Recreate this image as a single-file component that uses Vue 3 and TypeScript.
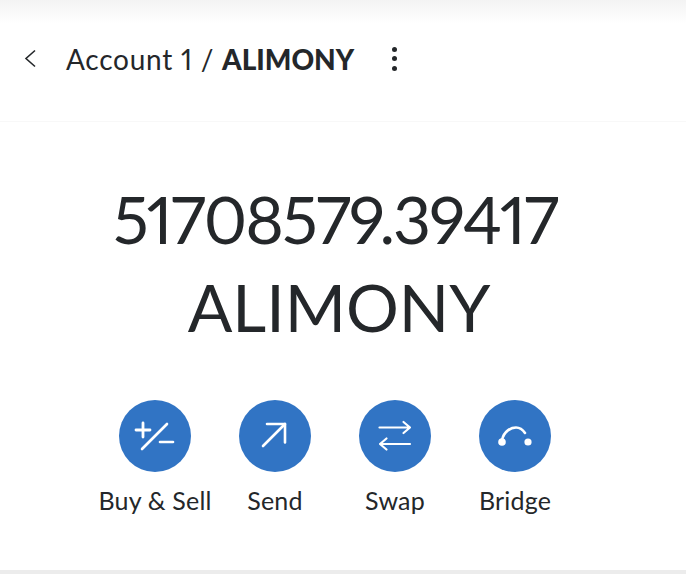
<script setup lang="ts">
interface Action { label: string; icon: string }
const actions: Action[] = [
  { label: 'Buy & Sell', icon: 'buy' },
  { label: 'Send', icon: 'send' },
  { label: 'Swap', icon: 'swap' },
  { label: 'Bridge', icon: 'bridge' },
]
</script>

<template>
  <div class="page">
    <header class="top">
      <svg class="back" width="14" height="20" viewBox="0 0 14 20" fill="none">
        <path d="M12 1.5 3 9.5 12 17.5" stroke="#24272a" stroke-width="1.6" />
      </svg>
      <h1 class="title">Account 1 / <b>ALIMONY</b></h1>
      <div class="dots"><i></i><i></i><i></i></div>
    </header>
    <main class="main">
      <div class="balance"><div class="num">51708579.39417</div><div class="sym">ALIMONY</div></div>
      <div class="actions">
        <div v-for="a in actions" :key="a.label" class="action">
          <div class="circle">
            <svg width="72" height="72" viewBox="0 0 72 72" fill="none" stroke="#fff" stroke-width="2.6" stroke-linecap="round" stroke-linejoin="round">
              <g v-if="a.icon === 'buy'">
                <path d="M17 30h14M24 23v14" stroke-width="2.8" />
                <path d="M23 49 48 24" />
                <path d="M41 42h13" />
              </g>
              <g v-else-if="a.icon === 'send'">
                <path d="M24 46 46 24" />
                <path d="M28 24h18v18.500" />
              </g>
              <g v-else-if="a.icon === 'swap'">
                <path d="M20.500 27.500H51M44.500 22l6.500 5.500-6.500 5.500" stroke-width="2.200" />
                <path d="M51 44H21M27.500 38.500 21 44l6.500 5.500" stroke-width="2.200" />
              </g>
              <g v-else>
                <path d="M23 40C25 31 32 27.500 37 27.500 41 27.500 44 30 46 33" />
                <circle cx="23" cy="42" r="3.800" fill="#fff" stroke="none" />
                <circle cx="49" cy="42" r="3.600" fill="#fff" stroke="none" />
              </g>
            </svg>
          </div>
          <span class="label">{{ a.label }}</span>
        </div>
      </div>
    </main>
    <div class="foot"></div>
  </div>
</template>

<style scoped>
.page {
  width: 686px;
  height: 574px;
  display: flex;
  flex-direction: column;
  background: #fff;
  color: #24272a;
  font-family: Lato, "Liberation Sans", sans-serif;
  font-variant-numeric: proportional-nums;
  overflow: hidden;
}
.top {
  height: 122px;
  flex: none;
  box-sizing: border-box;
  padding: 0 0 4px 23px;
  display: flex;
  align-items: center;
  border-bottom: 1px solid #f8f8f8;
  background: linear-gradient(#f3f3f3 0, #fff 24px);
}
.back {
  flex: none;
  margin-right: 29px;
}
.title {
  margin: 0;
  font-size: 28px;
  font-weight: 400;
  letter-spacing: 0.75px;
  white-space: nowrap;
}
.title b {
  font-weight: 900;
  letter-spacing: 0;
}
.dots {
  margin-left: 38px;
  display: flex;
  flex-direction: column;
  gap: 4.5px;
}
.dots i {
  width: 5px;
  height: 5px;
  border-radius: 50%;
  background: #24272a;
}
.main {
  flex: 1;
  display: flex;
  flex-direction: column;
  align-items: center;
  padding: 53px 16px 0 0;
}
.balance {
  font-size: 66px;
  line-height: 88px;
  text-align: center;
  white-space: nowrap;
}
.num {
  letter-spacing: -1.9px;
}
.sym {
  padding-left: 8px;
}
.actions {
  margin-top: 49px;
  display: flex;
  gap: 8px;
}
.action {
  width: 112px;
  display: flex;
  flex-direction: column;
  align-items: center;
  gap: 14px;
}
.circle {
  width: 72px;
  height: 72px;
  border-radius: 50%;
  background: #3174c4;
}
.circle svg {
  display: block;
}
.label {
  font-size: 25px;
  line-height: 28px;
  letter-spacing: 0.2px;
  white-space: nowrap;
}
.foot {
  flex: none;
  height: 4px;
  background: #ececec;
}
</style>
